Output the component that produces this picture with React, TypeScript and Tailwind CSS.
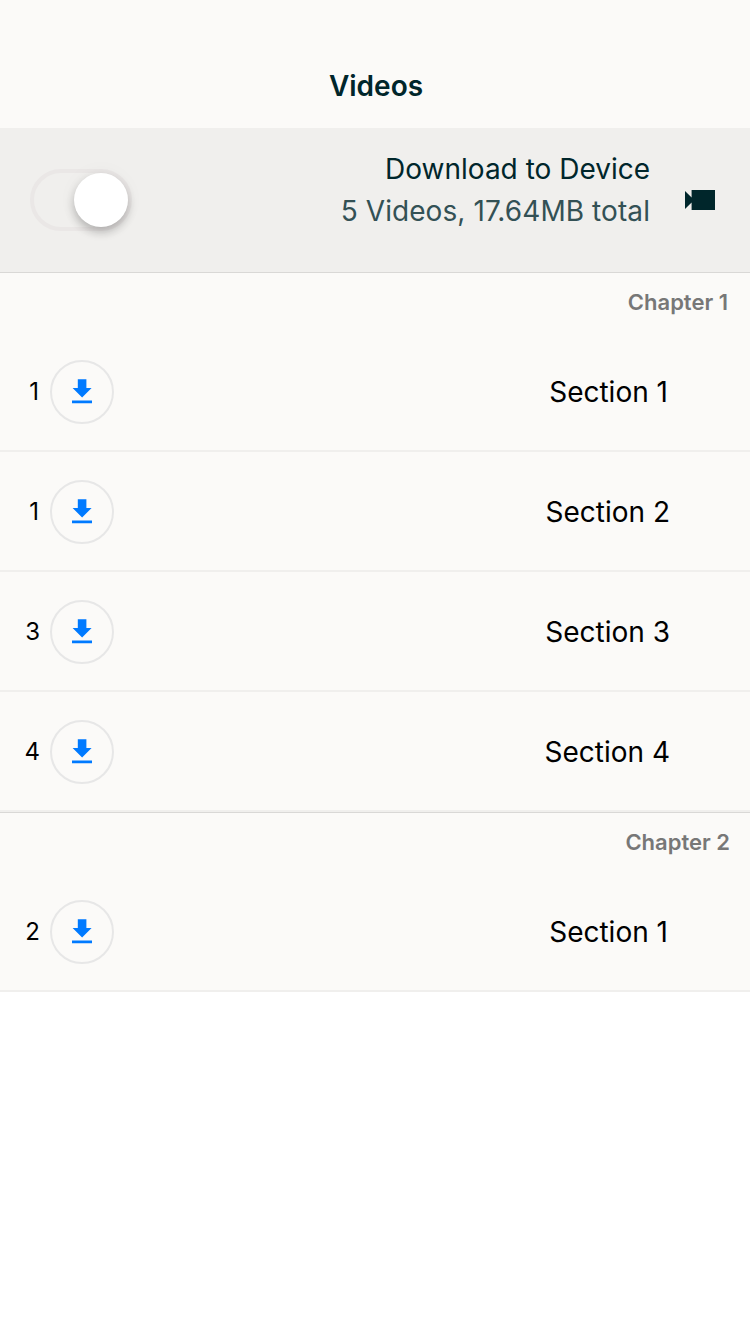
import React from "react";
import clsx from "clsx";

type Section = { number: number; title: string };
type Chapter = { title: string; sections: Section[] };

const chapters: Chapter[] = [
  {
    title: "Chapter 1",
    sections: [
      { number: 1, title: "Section 1" },
      { number: 1, title: "Section 2" },
      { number: 3, title: "Section 3" },
      { number: 4, title: "Section 4" },
    ],
  },
  { title: "Chapter 2", sections: [{ number: 2, title: "Section 1" }] },
];

const endsInOne = (text: string) => text.endsWith("1");

function DownloadButton() {
  return (
    <button className="ml-2.5 flex size-16 items-center justify-center rounded-full border-2 border-[#e7e7e7]">
      <svg width="20" height="26" viewBox="0 0 20 26" fill="#007aff">
        <path d="M5.8 0.3h8.6v8.7h5.2L10.1 18.5 0.6 9h5.2zM0 21.5h20v2.8H0z" />
      </svg>
    </button>
  );
}

function SectionRow({ section }: { section: Section }) {
  return (
    <li className="flex h-[120px] items-center border-b-2 border-[#f0efed] pt-0.5 pr-20">
      <span className={clsx("w-10 text-right text-[24px] font-[370] text-black", section.number === 1 && "pr-px")}>
        {section.number}
      </span>
      <DownloadButton />
      <span className={clsx("ml-auto text-[28px] font-[370] text-black", endsInOne(section.title) && "pr-0.5")}>
        {section.title}
      </span>
    </li>
  );
}

export default function App() {
  return (
    <div className="min-h-screen w-[750px] bg-white font-['Inter',sans-serif]">
      <header className="flex h-32 items-end justify-center bg-[#fbfaf8] pb-[21px] pl-0.5">
        <h1 className="text-[28px] leading-[42px] font-semibold text-[#00262b]">Videos</h1>
      </header>
      <div className="flex h-36 items-start bg-[#f0efed] pr-[35px] pl-[30px]">
        <div className="mt-[41px] flex h-[62px] w-[102px] items-center rounded-full border-4 border-[#eae7e6] pl-10">
          <span className="size-[54px] shrink-0 rounded-full bg-white shadow-[0_5px_10px_rgba(0,0,0,0.24),0_0_20px_rgba(0,0,0,0.04)]" />
        </div>
        <div className="mt-[20px] ml-auto text-right text-[28px] leading-[42px] font-[370]">
          <p className="text-[#00262b]">Download to Device</p>
          <p className="tracking-[0.08px] text-[#335155]">5 Videos, 17.64MB total</p>
        </div>
        <svg className="mt-[62px] ml-[35px]" width="30" height="20" viewBox="0 0 30 20" fill="#00262b">
          <path d="M6.6 0H30v20H6.6v-7.5L0 19V1l6.6 6.5z" />
        </svg>
      </div>
      {chapters.map((chapter) => (
        <section key={chapter.title} className="bg-[#fbfaf8]">
          <h2
            className={clsx(
              "flex h-[60px] items-center justify-end border-t border-[#d9d8d6] text-[22px] font-semibold text-[#777777]",
              endsInOne(chapter.title) ? "pr-[22px]" : "pr-5",
            )}
          >
            {chapter.title}
          </h2>
          <ul>
            {chapter.sections.map((section) => (
              <SectionRow key={section.title} section={section} />
            ))}
          </ul>
        </section>
      ))}
    </div>
  );
}
